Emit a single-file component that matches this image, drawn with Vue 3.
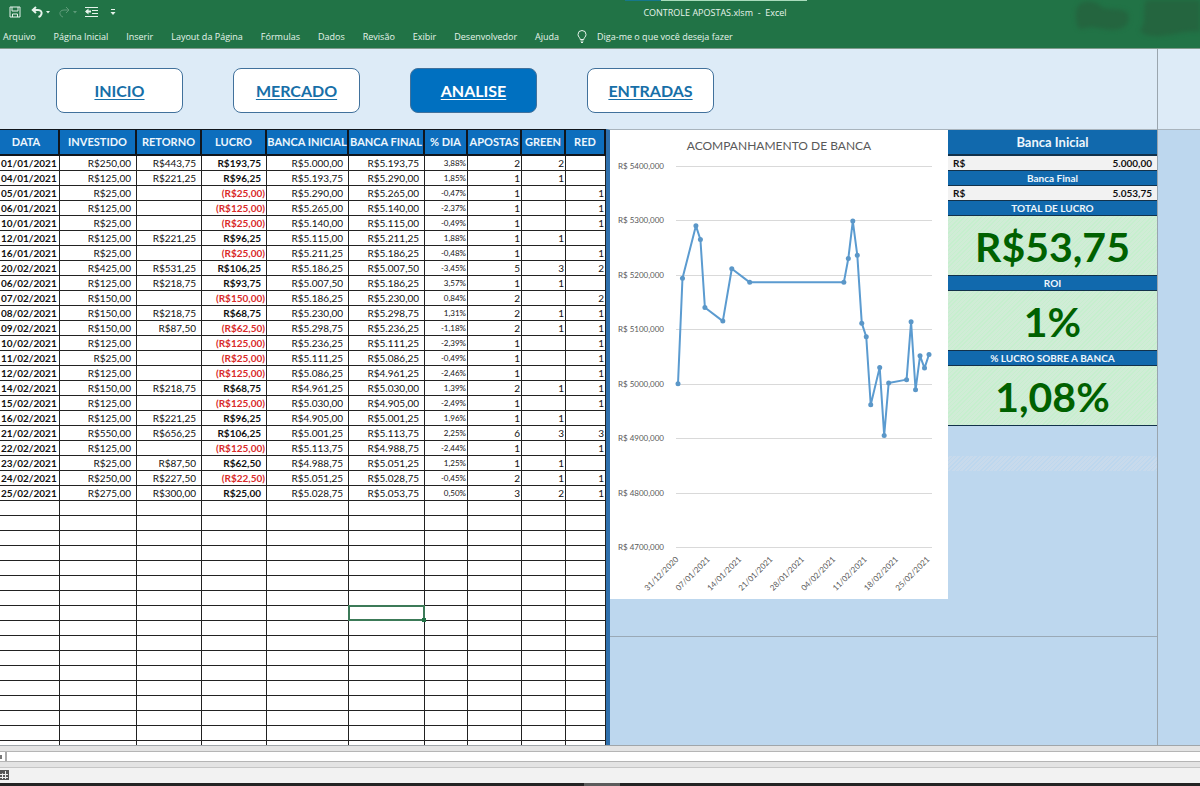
<script setup>
const menu = ['Arquivo', 'Página Inicial', 'Inserir', 'Layout da Página', 'Fórmulas', 'Dados', 'Revisão', 'Exibir', 'Desenvolvedor', 'Ajuda']

const links = [
  { label: 'INICIO', active: false },
  { label: 'MERCADO', active: false },
  { label: 'ANALISE', active: true },
  { label: 'ENTRADAS', active: false }
]

const columns = ['DATA', 'INVESTIDO', 'RETORNO', 'LUCRO', 'BANCA INICIAL', 'BANCA FINAL', '% DIA', 'APOSTAS', 'GREEN', 'RED']
const columnKeys = ['date', 'stake', 'payout', 'profit', 'opening', 'closing', 'percent', 'bets', 'green', 'red']

const entries = [
  ['01/01/2021', '250,00', '443,75', '193,75', '5.000,00', '5.193,75', '3,88%', 2, 2, ''],
  ['04/01/2021', '125,00', '221,25', '96,25', '5.193,75', '5.290,00', '1,85%', 1, 1, ''],
  ['05/01/2021', '25,00', '', '-25,00', '5.290,00', '5.265,00', '-0,47%', 1, '', 1],
  ['06/01/2021', '125,00', '', '-125,00', '5.265,00', '5.140,00', '-2,37%', 1, '', 1],
  ['10/01/2021', '25,00', '', '-25,00', '5.140,00', '5.115,00', '-0,49%', 1, '', 1],
  ['12/01/2021', '125,00', '221,25', '96,25', '5.115,00', '5.211,25', '1,88%', 1, 1, ''],
  ['16/01/2021', '25,00', '', '-25,00', '5.211,25', '5.186,25', '-0,48%', 1, '', 1],
  ['20/02/2021', '425,00', '531,25', '106,25', '5.186,25', '5.007,50', '-3,45%', 5, 3, 2],
  ['06/02/2021', '125,00', '218,75', '93,75', '5.007,50', '5.186,25', '3,57%', 1, 1, ''],
  ['07/02/2021', '150,00', '', '-150,00', '5.186,25', '5.230,00', '0,84%', 2, '', 2],
  ['08/02/2021', '150,00', '218,75', '68,75', '5.230,00', '5.298,75', '1,31%', 2, 1, 1],
  ['09/02/2021', '150,00', '87,50', '-62,50', '5.298,75', '5.236,25', '-1,18%', 2, 1, 1],
  ['10/02/2021', '125,00', '', '-125,00', '5.236,25', '5.111,25', '-2,39%', 1, '', 1],
  ['11/02/2021', '25,00', '', '-25,00', '5.111,25', '5.086,25', '-0,49%', 1, '', 1],
  ['12/02/2021', '125,00', '', '-125,00', '5.086,25', '4.961,25', '-2,46%', 1, '', 1],
  ['14/02/2021', '150,00', '218,75', '68,75', '4.961,25', '5.030,00', '1,39%', 2, 1, 1],
  ['15/02/2021', '125,00', '', '-125,00', '5.030,00', '4.905,00', '-2,49%', 1, '', 1],
  ['16/02/2021', '125,00', '221,25', '96,25', '4.905,00', '5.001,25', '1,96%', 1, 1, ''],
  ['21/02/2021', '550,00', '656,25', '106,25', '5.001,25', '5.113,75', '2,25%', 6, 3, 3],
  ['22/02/2021', '125,00', '', '-125,00', '5.113,75', '4.988,75', '-2,44%', 1, '', 1],
  ['23/02/2021', '25,00', '87,50', '62,50', '4.988,75', '5.051,25', '1,25%', 1, 1, ''],
  ['24/02/2021', '250,00', '227,50', '-22,50', '5.051,25', '5.028,75', '-0,45%', 2, 1, 1],
  ['25/02/2021', '275,00', '300,00', '25,00', '5.028,75', '5.053,75', '0,50%', 3, 2, 1]
]
const emptyRows = Array.from({ length: 17 }, () => Array(10).fill(''))
const rows = [...entries, ...emptyRows]
const selected = { row: 30, column: 5 }

const isNegative = (value, column) => column === 3 && String(value).startsWith('-')
const format = (value, column) => {
  if (value === '' || column < 1 || column > 5) return value
  return isNegative(value, column) ? `(R$${value.slice(1)})` : `R$${value}`
}

// [days since 31/12/2020, balance]
const balance = [
  [0, 5000], [1, 5193.75], [4, 5290], [5, 5265], [6, 5140], [10, 5115], [12, 5211.25], [16, 5186.25],
  [37, 5186.25], [38, 5230], [39, 5298.75], [40, 5236.25], [41, 5111.25], [42, 5086.25], [43, 4961.25],
  [45, 5030], [46, 4905], [47, 5001.25], [51, 5007.5], [52, 5113.75], [53, 4988.75], [54, 5051.25],
  [55, 5028.75], [56, 5053.75]
]
const xOf = (day) => 68 + (day * 251) / 56
const yOf = (value) => 36 + ((5400 - value) * 381) / 700
const points = balance.map(([day, value]) => ({ x: xOf(day), y: yOf(value) }))
const line = points.map((p) => `${p.x},${p.y}`).join(' ')
const yTicks = [5400, 5300, 5200, 5100, 5000, 4900, 4800, 4700]
const xTicks = ['31/12/2020', '07/01/2021', '14/01/2021', '21/01/2021', '28/01/2021', '04/02/2021', '11/02/2021', '18/02/2021', '25/02/2021']
</script>

<template>
  <div class="app">
    <header class="ribbon">
      <span class="strip"></span>
      <svg class="smudge" width="130" height="44" viewBox="0 0 130 44" aria-hidden="true">
        <path d="M8 6C14 -2 28 2 33 8c10 2 22 0 25 6c2 8-1 12-6 14c-10 4-22 0-30-1c-6 0-12 4-14 0c-3-8-3-15 0-21z" />
        <path d="M76 0h54v32c-14-2-26 3-40 4c-10 1-18-2-20-6c7-6 2-18 6-30z" />
      </svg>
      <div class="titlebar">
        <div class="quick">
          <button aria-label="Salvar">
            <svg width="12" height="12" viewBox="0 0 12 12"><path d="M1 1h10v10H1zM3 1v4h6V1M3.500 11V8h5v3" /></svg>
          </button>
          <button aria-label="Desfazer">
            <svg width="20" height="12" viewBox="0 0 20 12"><path class="bold" d="M5 1L1.800 4L5 7M2 4h5c3 0 4 2 3.500 4c-.4 1.600-1.500 2.500-3 3" /><path class="solid" d="M15 5h4l-2 2.500z" /></svg>
          </button>
          <button aria-label="Refazer" disabled>
            <svg width="20" height="12" viewBox="0 0 20 12"><path d="M8 1l3 3l-3 3M11 4H6C3 4 1.500 6 2 8c.4 1.600 1.500 2.500 3 3" /><path class="solid" d="M15 5h4l-2 2.500z" /></svg>
          </button>
          <button aria-label="Diminuir recuo">
            <svg width="13" height="12" viewBox="0 0 13 12"><path d="M0 1.500h13M7 4.500h6M7 7.500h6M0 10.500h13" /><path class="bold" d="M6 5.500H1" /><path class="solid" d="M0 5.500l3.500-3v6z" /></svg>
          </button>
          <button aria-label="Personalizar barra">
            <svg width="6" height="8" viewBox="0 0 6 8"><path d="M1 1.500h4" /><path class="solid" d="M.5 4h5L3 7z" /></svg>
          </button>
        </div>
        <div class="title">CONTROLE APOSTAS.xlsm&nbsp; -&nbsp; Excel</div>
      </div>
      <nav class="menu">
        <button v-for="item in menu" :key="item">{{ item }}</button>
        <button class="tell">
          <svg width="10" height="13" viewBox="0 0 10 13"><path d="M3.200 9.500C3.200 7.500 1 7 1 4.500a4 4 0 0 1 8 0C9 7 6.800 7.500 6.800 9.500zM3.500 11h3M4 12.500h2" /></svg>
          Diga-me o que você deseja fazer
        </button>
      </nav>
    </header>

    <main class="workbook">
      <nav class="links">
        <a v-for="link in links" :key="link.label" href="#" :class="{ active: link.active }">{{ link.label }}</a>
      </nav>

      <div class="sheet">
        <table class="bets">
          <colgroup>
            <col v-for="key in columnKeys" :key="key" :class="'c-' + key" />
          </colgroup>
          <thead>
            <tr><th v-for="column in columns" :key="column">{{ column }}</th></tr>
          </thead>
          <tbody>
            <tr v-for="(row, r) in rows" :key="r">
              <td
                v-for="(value, c) in row"
                :key="c"
                :class="[columnKeys[c], { negative: isNegative(value, c), selected: r === selected.row && c === selected.column }]"
              >{{ format(value, c) }}</td>
            </tr>
          </tbody>
        </table>

        <section class="board">
          <div class="upper">
            <figure class="chart">
              <svg viewBox="0 0 338 469" role="img" aria-label="Acompanhamento de banca">
                <text class="chart-title" x="169" y="20">ACOMPANHAMENTO DE BANCA</text>
                <g v-for="tick in yTicks" :key="tick">
                  <line class="grid" x1="66" x2="322" :y1="Math.round(yOf(tick)) + 0.5" :y2="Math.round(yOf(tick)) + 0.5" />
                  <text class="y-label" x="54" :y="yOf(tick) + 3">R$ {{ tick }},000</text>
                </g>
                <polyline class="series" :points="line" />
                <circle v-for="(p, i) in points" :key="i" class="dot" :cx="p.x" :cy="p.y" r="2.500" />
                <text
                  v-for="(tick, i) in xTicks"
                  :key="tick"
                  class="x-label"
                  :transform="`translate(${xOf(i * 7) + 1} 430) rotate(-45)`"
                >{{ tick }}</text>
              </svg>
            </figure>
            <aside class="summary">
              <h2 class="first">Banca Inicial</h2>
              <p class="money"><span>R$</span><span>5.000,00</span></p>
              <h2>Banca Final</h2>
              <p class="money"><span>R$</span><span>5.053,75</span></p>
              <h2>TOTAL DE LUCRO</h2>
              <p class="figure">R$53,75</p>
              <h2>ROI</h2>
              <p class="figure">1%</p>
              <h2>% LUCRO SOBRE A BANCA</h2>
              <p class="figure">1,08%</p>
              <div class="hatch"></div>
            </aside>
          </div>
        </section>
      </div>
      <div class="gutter"></div>
    </main>

    <footer>
      <div class="tabs"><span class="scroll"></span></div>
      <div class="status">
        <svg width="9" height="10" viewBox="0 0 9 10" aria-hidden="true"><path class="sheet-bg" d="M0 0h9v10H0z" /><path d="M0 4.500h8M0 7.500h8M2.500 3v6M5.500 1v8" /><circle cx="1" cy="2" r="2" /></svg>
      </div>
      <div class="taskbar"><span></span></div>
    </footer>
  </div>
</template>

<style>
body {
  margin: 0;
}
</style>

<style scoped>
* {
  box-sizing: border-box;
}
.app {
  display: flex;
  flex-direction: column;
  height: 100vh;
  overflow: hidden;
  font-family: Lato, "Liberation Sans", sans-serif;
  color: #111;
}
button {
  margin: 0;
  padding: 0;
  border: 0;
  background: none;
  color: inherit;
  font: inherit;
}
.ribbon {
  position: relative;
  flex: none;
  height: 49px;
  background: #217346;
  border-bottom: 1px solid #7f9a8b;
  color: #e6f3eb;
  font-family: "Open Sans", "Noto Sans", sans-serif;
  font-size: 9px;
}
.strip {
  position: absolute;
  top: 0;
  left: 625px;
  width: 182px;
  height: 1px;
  background: linear-gradient(90deg, #16788a 36px, #a9dcbc 36px);
}
.smudge {
  position: absolute;
  top: 0;
  right: 0;
  fill: #24653f;
  filter: blur(2px);
}
.titlebar {
  position: relative;
  display: flex;
  align-items: center;
  height: 24px;
}
.quick {
  display: flex;
  align-items: center;
  gap: 7px;
  width: 230px;
  padding-left: 9px;
}
.quick button {
  display: flex;
}
.quick button:first-child {
  margin-right: 3px;
}
.quick button:last-child {
  margin-left: 5px;
}
.quick button:disabled {
  opacity: 0.3;
}
.quick svg,
.tell svg {
  fill: none;
  stroke: #e6f3eb;
}
.quick .bold {
  stroke-width: 2;
}
.quick .solid {
  fill: #e6f3eb;
  stroke: none;
}
.title {
  flex: 1;
  text-align: center;
}
.menu {
  display: flex;
  align-items: center;
  gap: 18px;
  height: 24px;
  padding-left: 3px;
  white-space: nowrap;
}
.tell {
  display: flex;
  align-items: center;
  gap: 10px;
}
.workbook {
  flex: 1;
  min-height: 0;
  display: grid;
  grid-template-columns: 1fr 43px;
  grid-template-rows: 80px 1fr;
  background: #bdd7ee;
}
.links {
  display: flex;
  align-items: center;
  gap: 50px;
  padding: 3px 0 0 56px;
  background: #ddebf7;
}
.links a {
  width: 127px;
  height: 45px;
  border: 1px solid #41719c;
  border-radius: 8px;
  background: #fff;
  color: #176fa8;
  font-size: 16px;
  font-weight: 700;
  line-height: 43px;
  text-align: center;
  text-underline-offset: 2px;
}
.links .active {
  background: #0070c0;
  color: #fff;
}
.gutter {
  grid-column: 2;
  grid-row: 1 / 3;
  border-left: 1px solid #9aa5ae;
  background: linear-gradient(#ddebf7 80px, #a9b4bd 80px, #a9b4bd 81px, transparent 81px);
}
.sheet {
  display: flex;
  min-height: 0;
  overflow: hidden;
}
.bets {
  flex: none;
  width: 606px;
  height: max-content;
  table-layout: fixed;
  border-collapse: separate;
  border-spacing: 0;
  background: #fff;
  font-size: 10px;
}
.c-date { width: 60px; }
.c-stake { width: 77px; }
.c-payout { width: 65px; }
.c-profit { width: 65px; }
.c-opening { width: 82px; }
.c-closing { width: 76px; }
.c-percent { width: 43px; }
.c-bets { width: 54px; }
.c-green { width: 44px; }
.c-red { width: 40px; }
.bets th {
  height: 27px;
  padding: 0;
  border: solid #10151c;
  border-width: 1px 2px 2px 0;
  background: #0d6ebd;
  color: #eef6fc;
  font-size: 11px;
  line-height: 24px;
  white-space: nowrap;
}
.bets th:first-child {
  padding-right: 6px;
}
.bets td {
  height: 15px;
  padding: 1px 5px 0 0;
  border: solid #222;
  border-width: 0 1px 1px 0;
  line-height: 13px;
  text-align: right;
  white-space: nowrap;
}
.bets .date {
  padding-right: 7px;
  direction: rtl;
  text-align: right;
  unicode-bidi: plaintext;
  font-weight: 700;
}
.bets .profit {
  font-weight: 700;
}
.bets .negative {
  padding-right: 1px;
  color: #d92a2a;
}
.bets .percent {
  padding-right: 1px;
  font-size: 8px;
}
.bets .bets,
.bets .green,
.bets .red {
  padding-right: 1px;
}
.bets .selected {
  position: relative;
}
.selected::before {
  content: "";
  position: absolute;
  inset: -1px -1px -1px -1px;
  border: 2px solid #3c7a58;
}
.selected::after {
  content: "";
  position: absolute;
  right: -2px;
  bottom: -2px;
  width: 4px;
  height: 4px;
  background: #217346;
}
.board {
  flex: 1;
  min-width: 0;
  border-left: 4px solid #2f70ad;
  border-top: 1px solid #a9b4bd;
}
.upper {
  display: flex;
  align-items: flex-start;
  height: 507px;
  border-bottom: 1px solid #9aa9b6;
}
.chart {
  flex: 1;
  min-width: 0;
  margin: 0;
  background: #fff;
}
.chart svg {
  display: block;
  width: 100%;
}
.chart text {
  fill: #595959;
}
.chart-title {
  font-size: 12px;
  text-anchor: middle;
}
.y-label {
  font-size: 8px;
  text-anchor: end;
}
.x-label {
  font-size: 8px;
  text-anchor: end;
}
.grid {
  stroke: #d9d9d9;
}
.series {
  fill: none;
  stroke: #5b9bd0;
  stroke-width: 2;
  stroke-linejoin: round;
}
.dot {
  fill: #5b97c8;
}
.summary {
  flex: none;
  width: 209px;
}
.summary h2,
.summary p {
  margin: 0;
  border-bottom: 1px solid #12314a;
  font-weight: 700;
  text-align: center;
}
.summary h2 {
  height: 15px;
  background: #1169ad;
  color: #eef6fc;
  font-size: 10px;
  line-height: 14px;
}
.summary .first {
  height: 26px;
  border-bottom-width: 2px;
  font-size: 13px;
  line-height: 25px;
}
.summary .money {
  display: flex;
  justify-content: space-between;
  height: 15px;
  padding: 0 5px;
  background: #f2f2f2;
  font-size: 10px;
  line-height: 14px;
}
.summary .figure {
  height: 60px;
  background: repeating-linear-gradient(135deg, #c6efce 0 1px, #d0ecd6 1px 3px);
  color: #006100;
  font-size: 41px;
  line-height: 62px;
}
.hatch {
  height: 15px;
  margin-top: 30px;
  background: repeating-linear-gradient(135deg, #bdd7ee 0 1px, #c8daec 1px 3px);
}
footer {
  flex: none;
  background: #e4e4e4;
  border-top: 1px solid #a0a6aa;
}
.tabs {
  height: 11px;
  margin: 5px 0;
  border: solid #b5b5b5;
  border-width: 1px 0;
  background: #fff;
}
.scroll {
  display: block;
  width: 7px;
  height: 9px;
  border-right: 2px solid #aaa;
  background: linear-gradient(90deg, #777 2px, transparent 2px) 0 3px / 100% 4px no-repeat;
}
.status {
  height: 16px;
  padding-top: 2px;
  border-top: 1px solid #c6c6c6;
  background: #f2f2f2;
}
.status svg {
  display: block;
  fill: #555;
  stroke: #fff;
}
.status path {
  stroke: #eee;
}
.status .sheet-bg {
  stroke: none;
}
.status circle {
  stroke: none;
}
.taskbar {
  display: flex;
  height: 3px;
  background: #242424;
}
.taskbar span {
  width: 36px;
  margin-left: 584px;
  background: #5c5c5c;
}
</style>
